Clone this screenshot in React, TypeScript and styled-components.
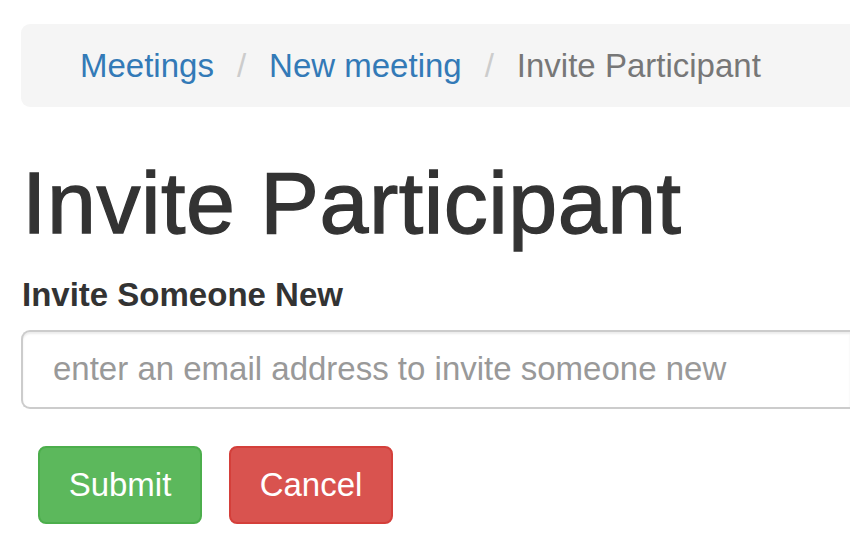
import React from 'react';
import styled, {createGlobalStyle} from 'styled-components';

const GlobalStyle = createGlobalStyle`
	html, body {
		margin: 0;
		padding: 0;
		background: #fff;
		overflow: hidden;
	}
	body {
		font-family: 'Liberation Sans', Arial, Helvetica, sans-serif;
		color: #333;
	}
`;

// the view is cropped on the right, so the wide bar and field run into the edge
const Page = styled.div`
	box-sizing: border-box;
	width: 850px;
	padding: 24px 0 0 21px;
	display: flex;
	flex-direction: column;
`;

const Breadcrumb = styled.nav`
	height: 83px;
	box-sizing: border-box;
	padding: 0 0 0 59px;
	background: #f5f5f5;
	border-radius: 9px 0 0 9px;
	display: flex;
	align-items: center;
	font-size: 33px;
`;

const Crumb = styled.a<{$active?: boolean}>`
	color: ${p => (p.$active ? '#777' : '#337ab7')};
	text-decoration: none;
	white-space: nowrap;
`;

const Separator = styled.span`
	color: #ccc;
	margin: 0 23px;
`;

const Title = styled.h1`
	margin: 48px 0 0 1px;
	font-size: 88px;
	line-height: 1.1;
	font-weight: 400;
	color: #333;
	letter-spacing: 0.5px;
	-webkit-text-stroke: 1.3px #333;
`;

const Label = styled.label`
	display: block;
	margin: 19px 0 0 1px;
	font-size: 33px;
	line-height: 47px;
	font-weight: 700;
	color: #333;
`;

const Input = styled.input`
	margin-top: 12px;
	height: 79px;
	box-sizing: border-box;
	padding: 0 30px;
	border: 2px solid #ccc;
	border-right: none;
	border-radius: 9px 0 0 9px;
	box-shadow: inset 0 2px 2px rgba(0, 0, 0, 0.075);
	font-family: inherit;
	font-size: 33px;
	color: #555;
	outline: none;
	&::placeholder {
		color: #999;
	}
`;

const Actions = styled.div`
	display: flex;
	gap: 27px;
	margin: 37px 0 0 17px;
`;

const Button = styled.button<{$variant: 'success' | 'danger'}>`
	width: 164px;
	height: 78px;
	border-radius: 8px;
	border: 2px solid ${p => (p.$variant === 'success' ? '#4cae4c' : '#d43f3a')};
	background: ${p => (p.$variant === 'success' ? '#5cb85c' : '#d9534f')};
	color: #fff;
	font-family: inherit;
	font-size: 33px;
	cursor: pointer;
`;

const App = () => (
	<>
		<GlobalStyle />
		<Page>
			<Breadcrumb>
				<Crumb href='#'>Meetings</Crumb>
				<Separator>/</Separator>
				<Crumb href='#'>New meeting</Crumb>
				<Separator>/</Separator>
				<Crumb $active>Invite Participant</Crumb>
			</Breadcrumb>

			<Title>Invite Participant</Title>

			<Label htmlFor='invite-email'>Invite Someone New</Label>
			<Input id='invite-email' type='email' placeholder='enter an email address to invite someone new' />

			<Actions>
				<Button type='submit' $variant='success'>Submit</Button>
				<Button type='button' $variant='danger'>Cancel</Button>
			</Actions>
		</Page>
	</>
);

export default App;
